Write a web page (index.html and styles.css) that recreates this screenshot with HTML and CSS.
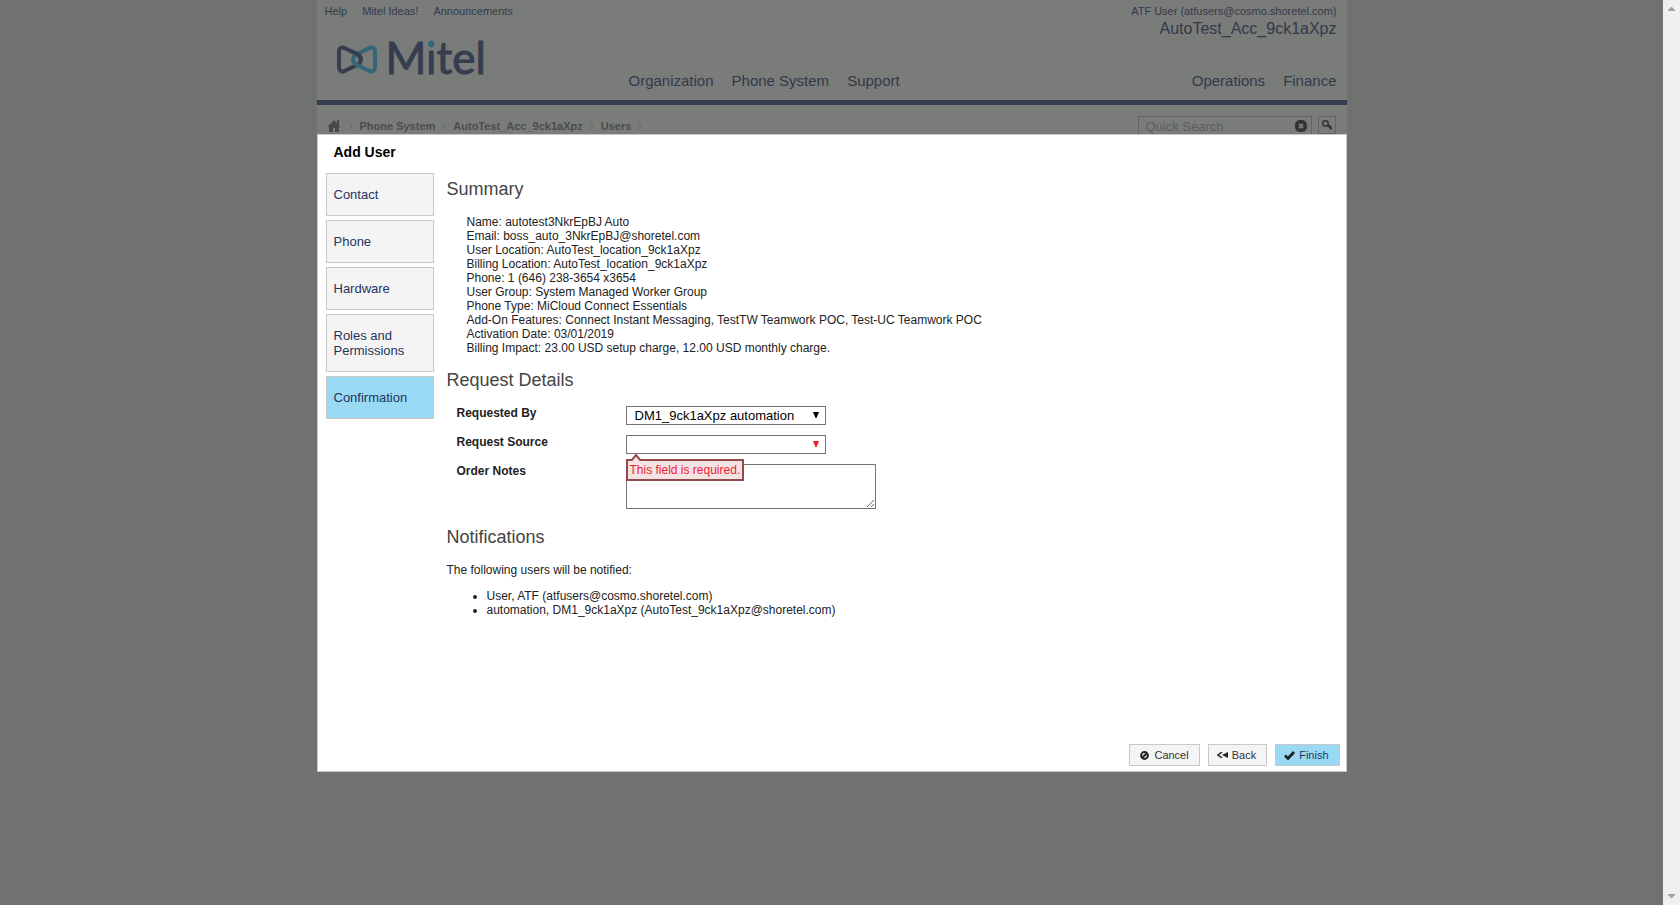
FILE: index.html
```html
<!DOCTYPE html>
<html lang="en">
<head>
<meta charset="utf-8">
<title>Add User</title>
<link rel="stylesheet" href="styles.css">
</head>
<body>
<div class="page">
  <div class="site">
    <header class="header">
      <nav class="utility" aria-label="Utility">
        <a href="#">Help</a>
        <a href="#">Mitel Ideas!</a>
        <a href="#">Announcements</a>
        <a class="account" href="#">ATF User (atfusers@cosmo.shoretel.com)</a>
      </nav>
      <div class="brand-row">
        <svg class="logo-mark" width="40" height="29" viewBox="0 0 40 29" fill="none" stroke-width="4" aria-hidden="true">
          <path d="M2 7Q2 1 7.500 3L21 9.500Q27 14.500 21 19.500L7.500 26Q2 28 2 22Z" stroke="#353d4f"/>
          <path d="M38 7Q38 1 32.500 3L19 9.500Q13 14.500 19 19.500L32.500 26Q38 28 38 22Z" stroke="#34657a"/>
          <path d="M12 5.200 21 9.500Q24 12 24 15" stroke="#353d4f"/>
        </svg>
        <span class="wordmark">M<span class="wordmark-i">i</span>tel</span>
        <span class="account-name">AutoTest_Acc_9ck1aXpz</span>
      </div>
      <nav class="main-nav" aria-label="Main">
        <a href="#">Organization</a>
        <a href="#">Phone System</a>
        <a href="#">Support</a>
        <a class="push" href="#">Operations</a>
        <a href="#">Finance</a>
      </nav>
    </header>
    <div class="toolbar">
      <nav class="crumbs" aria-label="Breadcrumb">
        <a class="home" href="#" aria-label="Home"><svg width="12" height="12" viewBox="0 0 12 12" fill="#484a49"><path d="M6 0 0 6v1h1v5h4V8h2v4h4V7h1V6l-1-1V0H9v3z"/></svg></a>
        <svg width="4" height="8" viewBox="0 0 4 8" fill="none" stroke="#666867"><path d="m0 0 3 4-3 4"/></svg>
        <a href="#">Phone System</a>
        <svg width="4" height="8" viewBox="0 0 4 8" fill="none" stroke="#666867"><path d="m0 0 3 4-3 4"/></svg>
        <a href="#">AutoTest_Acc_9ck1aXpz</a>
        <svg width="4" height="8" viewBox="0 0 4 8" fill="none" stroke="#666867"><path d="m0 0 3 4-3 4"/></svg>
        <a href="#">Users</a>
        <svg width="4" height="8" viewBox="0 0 4 8" fill="none" stroke="#666867"><path d="m0 0 3 4-3 4"/></svg>
      </nav>
      <div class="search-box">
        <input class="search-input" type="text" placeholder="Quick Search" aria-label="Quick Search">
        <button class="search-clear" type="button" aria-label="Clear"><svg width="12" height="12" viewBox="0 0 12 12"><rect width="12" height="12" rx="5" fill="#333534"/><path d="m4 4 4 4m0-4L4 8" stroke="#7a7c7a" stroke-width="2"/></svg></button>
      </div>
      <button class="search-go" type="button" aria-label="Search"><svg width="10" height="10" viewBox="0 0 10 10" fill="none" stroke="#333534"><circle cx="3.500" cy="3.500" r="2.700" stroke-width="1.500"/><path d="m6 5 4 4" stroke-width="2.500"/></svg></button>
    </div>
  </div>
  <span class="version">19.03.1.63</span>

  <section class="dialog" role="dialog" aria-labelledby="dialog-title">
    <h1 class="dialog-title" id="dialog-title">Add User</h1>
    <div class="dialog-body">
      <nav class="steps" aria-label="Steps">
        <a class="step" href="#">Contact</a>
        <a class="step" href="#">Phone</a>
        <a class="step" href="#">Hardware</a>
        <a class="step" href="#">Roles and Permissions</a>
        <a class="step current" href="#">Confirmation</a>
      </nav>
      <div class="content">
        <h2>Summary</h2>
        <div class="summary">
          <div>Name: autotest3NkrEpBJ Auto</div>
          <div>Email: boss_auto_3NkrEpBJ@shoretel.com</div>
          <div>User Location: AutoTest_location_9ck1aXpz</div>
          <div>Billing Location: AutoTest_location_9ck1aXpz</div>
          <div>Phone: 1 (646) 238-3654 x3654</div>
          <div>User Group: System Managed Worker Group</div>
          <div>Phone Type: MiCloud Connect Essentials</div>
          <div>Add-On Features: Connect Instant Messaging, TestTW Teamwork POC, Test-UC Teamwork POC</div>
          <div>Activation Date: 03/01/2019</div>
          <div>Billing Impact: 23.00 USD setup charge, 12.00 USD monthly charge.</div>
        </div>
        <h2>Request Details</h2>
        <form class="form" id="request">
          <label for="by">Requested By</label>
          <div class="field">
            <select class="select" id="by"><option>DM1_9ck1aXpz automation</option></select>
            <svg class="arrow" width="6" height="6" viewBox="0 0 6 6" fill="#000"><path d="M0 0h6L3.500 6h-1z"/></svg>
          </div>
          <label for="source">Request Source</label>
          <div class="field">
            <select class="select" id="source" aria-describedby="source-error"><option></option></select>
            <svg class="arrow" width="6" height="6" viewBox="0 0 6 6" fill="#ee1c25"><path d="M0 0h6L3.500 6h-1z"/></svg>
            <div class="error" id="source-error" role="alert">This field is required.<svg class="error-tip" width="12" height="7" viewBox="0 0 12 7"><path d="M1 7 6 1l5 6" fill="#f3e3e3" stroke="#934a4d" stroke-width="2"/></svg></div>
          </div>
          <label for="notes">Order Notes</label>
          <textarea class="notes" id="notes"></textarea>
        </form>
        <h2>Notifications</h2>
        <p>The following users will be notified:</p>
        <ul>
          <li>User, ATF (atfusers@cosmo.shoretel.com)</li>
          <li>automation, DM1_9ck1aXpz (AutoTest_9ck1aXpz@shoretel.com)</li>
        </ul>
      </div>
    </div>
    <footer class="actions">
      <button class="button" type="button"><svg width="9" height="9" viewBox="0 0 9 9" fill="none" stroke="#222" stroke-width="2"><circle cx="4.500" cy="4.500" r="3.400"/><path d="m2 7 5-5"/></svg>Cancel</button>
      <button class="button back" type="button"><svg width="11" height="6" viewBox="0 0 11 6"><path d="M5 0 1 3l4 3" fill="none" stroke="#222" stroke-width="1.500"/><path d="M11 0v6L5 3z" fill="#222"/></svg>Back</button>
      <button class="button primary" type="submit" form="request"><svg width="11" height="9" viewBox="0 0 11 9" fill="none" stroke="#222" stroke-width="2.800"><path d="m1 4.500 3 3L10 1"/></svg>Finish</button>
    </footer>
  </section>
</div>
<div class="scrollbar" aria-hidden="true">
  <svg width="7" height="4" viewBox="0 0 7 4" fill="#a3a3a3"><path d="M3 0h1l3 3v1H0V3z"/></svg>
  <svg width="7" height="4" viewBox="0 0 7 4" fill="#a3a3a3"><path d="M3 4h1l3-3V0H0v1z"/></svg>
</div>
</body>
</html>
```
FILE: styles.css
```css
* { box-sizing: border-box; }

body {
  margin: 0;
  display: flex;
  min-height: 100vh;
  background: #707270;
  color: #222;
  font: 12px/14px "Liberation Sans", Arial, sans-serif;
}

a { color: inherit; text-decoration: none; }
button, input, select, textarea { font-family: inherit; margin: 0; }
svg { display: block; }

.page { position: relative; flex: 1; }

.site {
  max-width: 1030px;
  height: 200px;
  margin: 0 auto;
  background: #7a7c7a;
  color: #32394b;
}

.header {
  display: flex;
  flex-direction: column;
  height: 105px;
  padding: 4px 10px 0 8px;
  border-bottom: 5px solid #353d50;
}

.utility { display: flex; gap: 15px; font-size: 11px; }
.account { margin-left: auto; }

.brand-row { display: flex; height: 54px; padding-left: 12px; }
.logo-mark { margin-top: 27px; }
.wordmark {
  margin: 15px 0 0 9px;
  color: #353d4f;
  font: 44px/48px Lato, sans-serif;
  -webkit-text-stroke: 1px #353d4f;
}
.wordmark-i {
  background: linear-gradient(#34657a 19px, #353d4f 19px);
  -webkit-background-clip: text;
  background-clip: text;
  color: transparent;
  -webkit-text-stroke-color: transparent;
}
.account-name { margin-left: auto; font-size: 16px; line-height: 22px; }

.main-nav {
  display: flex;
  gap: 18px;
  padding-left: 304px;
  font-size: 15px;
  line-height: 17px;
}
.push { margin-left: auto; }

.toolbar { display: flex; padding: 11px 11px 0; }
.crumbs {
  display: flex;
  flex: 1;
  align-items: center;
  gap: 7px;
  height: 20px;
  color: #4b4d4c;
  font-size: 11px;
  font-weight: bold;
}
.home { margin-right: 2px; }
.search-box {
  display: flex;
  align-items: center;
  width: 174px;
  height: 20px;
  padding: 0 4px 0 7px;
  border: 1px solid #626463;
}
.search-input {
  flex: 1;
  min-width: 0;
  padding: 0;
  border: 0;
  background: none;
  font-size: 13px;
}
.search-input::placeholder { color: #5c5e5d; }
.search-clear { padding: 0; border: 0; background: none; }
.search-go {
  display: grid;
  place-items: center;
  width: 18px;
  height: 18px;
  margin-left: 6px;
  padding: 0;
  border: 1px solid #626463;
  background: none;
}

.version {
  position: absolute;
  top: 732px;
  left: 16px;
  color: #767876;
  font-size: 8px;
}

.dialog {
  position: absolute;
  top: 134px;
  left: 0;
  right: 0;
  display: flex;
  flex-direction: column;
  max-width: 1030px;
  min-height: 638px;
  margin: 0 auto;
  padding: 9px 6px 5px 8px;
  border: 1px solid #c8c8c8;
  background: #fff;
}
.dialog-title {
  margin: 0 0 13px 8px;
  color: #000;
  font-size: 14px;
  line-height: 16px;
}
.dialog-body { display: flex; flex: 1; gap: 13px; }

.steps { display: flex; flex-direction: column; gap: 4px; width: 108px; }
.step {
  padding: 13px 7px;
  border: 1px solid #c8c8c8;
  background: #f4f4f4;
  color: #1e355e;
  font-size: 13px;
  line-height: 15px;
}
.step.current { background: #9ad9f4; }

.content { flex: 1; padding-top: 5px; }
.content h2 {
  margin: 0;
  color: #444;
  font-size: 18px;
  font-weight: normal;
  line-height: 22px;
}
.summary { padding: 15px 20px 14px; line-height: 14px; }

.form {
  display: grid;
  grid-template-columns: 169px 1fr;
  row-gap: 10px;
  align-items: start;
  padding: 15px 0 17px 10px;
}
.form label { font-weight: bold; }
.field { position: relative; width: 200px; }
.select {
  display: block;
  width: 100%;
  height: 19px;
  padding: 0 20px 0 8px;
  border: 1px solid #767676;
  border-radius: 0;
  appearance: none;
  background: #fff;
  color: #000;
  font-size: 13px;
}
.arrow { position: absolute; top: 6px; right: 7px; pointer-events: none; }
.error {
  position: absolute;
  z-index: 1;
  top: 24px;
  left: 0;
  padding: 2px;
  border: 2px solid #934a4d;
  background: #f3e3e3;
  color: #ee1c35;
  line-height: 14px;
  white-space: nowrap;
}
.error-tip { position: absolute; top: -7px; left: 2px; }
.notes {
  display: block;
  width: 250px;
  height: 45px;
  border: 1px solid #767676;
}

.content p { margin: 15px 0 12px; }
.content ul { margin: 0; padding-left: 40px; }

.actions { display: flex; justify-content: flex-end; gap: 8px; }
.button {
  display: flex;
  align-items: center;
  gap: 5px;
  height: 22px;
  padding: 0 10px;
  border: 1px solid #c8c8c8;
  background: #f4f4f4;
  color: #333;
  font-size: 11px;
}
.button.back { padding-left: 8px; gap: 4px; }
.button.primary { gap: 4px; padding-left: 8px; background: #9ad9f4; color: #1e355e; }

.scrollbar {
  display: flex;
  flex-direction: column;
  align-items: center;
  justify-content: space-between;
  width: 17px;
  padding: 7px 0;
  background: #f0f0f0;
}
```
